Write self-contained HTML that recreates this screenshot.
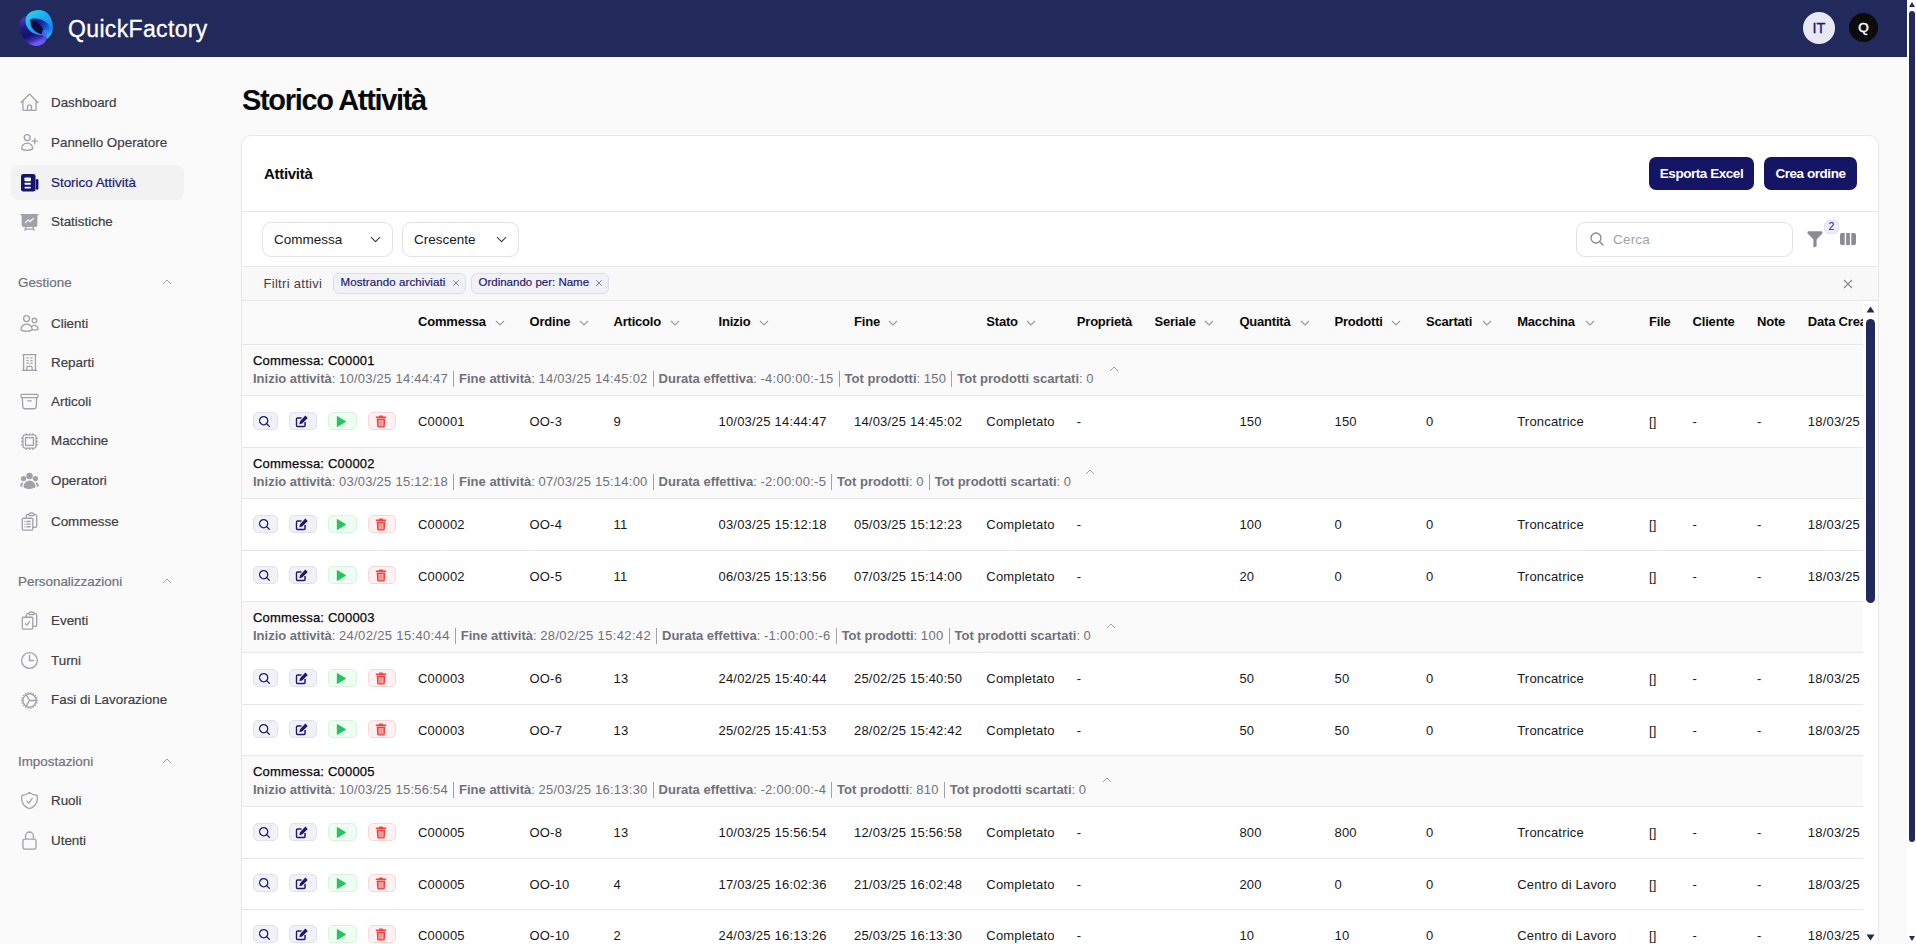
<!DOCTYPE html>
<html><head><meta charset="utf-8"><style>
*{box-sizing:border-box;margin:0;padding:0}
html,body{width:1916px;height:944px;overflow:hidden;background:#fafafa;font-family:"Liberation Sans",sans-serif;color:#111}
.a,.t{position:absolute}
svg{display:block}
.t{white-space:nowrap}
#hdr{position:absolute;left:0;top:0;width:1907px;height:57px;background:#222a5b}
.av{border-radius:50%;text-align:center}
.nav{font-size:13.4px;color:#3f3f46;-webkit-text-stroke:0.2px currentColor}
.btn{background:#141564;color:#fff;border-radius:7px;font-size:13.5px;font-weight:bold;text-align:center;letter-spacing:-0.45px}
.sel{border:1px solid #e2e2e5;border-radius:9px;background:#fff}
.chip{border:1px solid #dcdcef;background:#f1f1f8;border-radius:6px}
.hl{height:1px;background:#e7e7ea}
.th{font-size:13px;font-weight:bold;color:#09090b;letter-spacing:-0.2px}
.td{font-size:13px;color:#18181b;letter-spacing:0.2px}
.g1{font-size:13px;color:#09090b;letter-spacing:0.2px;-webkit-text-stroke:0.25px currentColor}
.g2{font-size:13px;color:#71717a}
.g2 b{font-weight:bold}
.g2 .v{letter-spacing:0.25px}
.sep{display:inline-block;width:1px;height:16px;background:#a1a1aa;vertical-align:-4px;margin:0 5px}
.ab{height:18px;border-radius:5px;border:1px solid}
</style></head><body>
<div id="hdr"></div>
<svg class="a" style="left:16px;top:6px" width="40" height="44" viewBox="0 0 40 44">
<defs>
<linearGradient id="pg" x1="0" y1="0" x2="0.35" y2="1"><stop offset="0" stop-color="#5b3fd6"/><stop offset="0.4" stop-color="#241a80"/><stop offset="0.7" stop-color="#15116e"/><stop offset="0.88" stop-color="#3a2cb8"/><stop offset="1" stop-color="#6a58f0"/></linearGradient>
<linearGradient id="cg" x1="0.1" y1="0" x2="0.9" y2="1"><stop offset="0" stop-color="#1fdcec"/><stop offset="0.5" stop-color="#1fa0f0"/><stop offset="0.8" stop-color="#1f80f2"/><stop offset="1" stop-color="#1ee0ee"/></linearGradient>
<linearGradient id="hg" x1="0" y1="0.3" x2="1" y2="0.7"><stop offset="0" stop-color="#0f0d58"/><stop offset="0.55" stop-color="#1a2aa8"/><stop offset="1" stop-color="#2077f0"/></linearGradient>
</defs>
<path d="M11 10 C5 11 3 16 3.5 22 C4.5 31 11 39 19 40 C25 40.5 29 37 30 34 L22 22 Z" fill="url(#pg)"/>
<path d="M9.5 15 C9.5 7 17 3.5 24 4 C31 4.5 35 10 36.5 17 C38 25 35 30 31 33 C30 30 28 29 25 29 C17 29 9.5 23 9.5 15 Z" fill="url(#cg)"/>
<path d="M14 14 C16 11.5 24 12 30 16 C34 19 35 23 34.5 26 C31 24 29 23.5 27 24 C22 25 15 20.5 14 14 Z" fill="url(#hg)"/>
<ellipse cx="21" cy="21.5" rx="8.2" ry="4" transform="rotate(45 21 21.5)" fill="#0d0b3c"/>
<path d="M26.5 24 C29.5 26.5 31 30.5 30.5 34 C28.5 32.5 27 29.5 26 27 Z" fill="#6055f0"/>
</svg>
<div class="t " style="left:68px;top:14.0px;line-height:30px;font-size:23px;color:#fff;letter-spacing:0.35px;-webkit-text-stroke:0.3px #fff">QuickFactory</div>
<div class="a av" style="left:1803px;top:12px;width:32px;height:32px;background:#e8e8f2;color:#1e1b6e;font-size:14.5px;line-height:32.5px;-webkit-text-stroke:0.4px currentColor">IT</div>
<div class="a av" style="left:1849px;top:13px;width:29px;height:29px;background:#0b0b0b;color:#fff;font-size:13.5px;line-height:29.5px;-webkit-text-stroke:0.5px currentColor">Q</div>
<div class="a" style="left:1907px;top:0;width:9px;height:944px;background:#fff"></div>
<div class="a" style="left:1909px;top:11px;width:6px;height:831px;background:#222a5b;border-radius:3px"></div>
<svg class="a" style="left:1909px;top:2px" width="6" height="5" viewBox="0 0 6 5" ><path d="M0 5L3 0L6 5Z" fill="#222a5b"/></svg>
<svg class="a" style="left:1909px;top:936px" width="6" height="5" viewBox="0 0 6 5" ><path d="M0 0L3 5L6 0Z" fill="#222a5b"/></svg>
<div class="a" style="left:11px;top:165px;width:173px;height:35px;background:#f2f2f3;border-radius:8px"></div>
<svg class="a" style="left:19px;top:92px" width="21" height="21" viewBox="0 0 24 24" ><path d="m2.25 12 8.954-8.955c.44-.439 1.152-.439 1.591 0L21.75 12M4.5 9.75v10.125c0 .621.504 1.125 1.125 1.125H9.75v-4.875c0-.621.504-1.125 1.125-1.125h2.25c.621 0 1.125.504 1.125 1.125V21h4.125c.621 0 1.125-.504 1.125-1.125V9.75M8.25 21h8.25" fill="none" stroke="#a1a1aa" stroke-width="1.5" stroke-linecap="round" stroke-linejoin="round"/></svg>
<div class="t nav" style="left:51px;top:93.2px;line-height:20px;color:#3f3f46">Dashboard</div>
<svg class="a" style="left:19px;top:132px" width="21" height="21" viewBox="0 0 24 24" ><path d="M18 7.5v3m0 0v3m0-3h3m-3 0h-3m-2.25-4.125a3.375 3.375 0 1 1-6.75 0 3.375 3.375 0 0 1 6.75 0ZM3 19.235v-.11a6.375 6.375 0 0 1 12.75 0v.109A12.318 12.318 0 0 1 9.374 21c-2.331 0-4.512-.645-6.374-1.766Z" fill="none" stroke="#a1a1aa" stroke-width="1.5" stroke-linecap="round" stroke-linejoin="round"/></svg>
<div class="t nav" style="left:51px;top:132.8px;line-height:20px;color:#3f3f46">Pannello Operatore</div>
<svg class="a" style="left:19px;top:172px" width="21" height="21" viewBox="0 0 24 24" ><rect x="2.3" y="2.3" width="16.6" height="19.9" rx="2.6" fill="#16146c"/><rect x="19.3" y="8" width="2.9" height="12.4" rx="1.45" fill="#16146c"/><rect x="6.2" y="6.2" width="7.4" height="4.3" rx="0.9" fill="#fff"/><rect x="6.2" y="12.4" width="7.4" height="2.1" rx="1" fill="#fff"/><rect x="6.2" y="16.8" width="7.4" height="2" rx="1" fill="#fff"/></svg>
<div class="t nav" style="left:51px;top:172.8px;line-height:20px;color:#1e1b6e">Storico Attività</div>
<svg class="a" style="left:19px;top:212px" width="21" height="21" viewBox="0 0 24 24" ><path fill="#a1a1aa" fill-rule="evenodd" d="M2.25 2.25a.75.75 0 0 0 0 1.5H3v10.5a3 3 0 0 0 3 3h1.21l-1.172 3.513a.75.75 0 0 0 1.424.474l.329-.987h8.418l.33.987a.75.75 0 0 0 1.422-.474l-1.17-3.513H18a3 3 0 0 0 3-3V3.75h.75a.75.75 0 0 0 0-1.5H2.25Zm6.54 15h6.42l.5 1.5H8.29l.5-1.5Zm8.085-8.995a.75.75 0 1 0-.75-1.299 12.81 12.81 0 0 0-3.558 3.05L11.03 8.47a.75.75 0 0 0-1.06 0l-3 3a.75.75 0 1 0 1.06 1.06l2.47-2.47 1.617 1.618a.75.75 0 0 0 1.146-.102 11.312 11.312 0 0 1 3.612-3.321Z"/></svg>
<div class="t nav" style="left:51px;top:212.3px;line-height:20px;color:#3f3f46">Statistiche</div>
<svg class="a" style="left:19px;top:313px" width="21" height="21" viewBox="0 0 24 24" ><path d="M15 19.128a9.38 9.38 0 0 0 2.625.372 9.337 9.337 0 0 0 4.121-.952 4.125 4.125 0 0 0-7.533-2.493M15 19.128v-.003c0-1.113-.285-2.16-.786-3.07M15 19.128v.106A12.318 12.318 0 0 1 8.624 21c-2.331 0-4.512-.645-6.374-1.766l-.001-.109a6.375 6.375 0 0 1 11.964-3.07M12 6.375a3.375 3.375 0 1 1-6.75 0 3.375 3.375 0 0 1 6.75 0Zm8.25 2.25a2.625 2.625 0 1 1-5.25 0 2.625 2.625 0 0 1 5.25 0Z" fill="none" stroke="#a1a1aa" stroke-width="1.5" stroke-linecap="round" stroke-linejoin="round"/></svg>
<div class="t nav" style="left:51px;top:313.5px;line-height:20px;color:#3f3f46">Clienti</div>
<svg class="a" style="left:19px;top:352px" width="21" height="21" viewBox="0 0 24 24" ><path d="M3.75 21h16.5M4.5 3h15M5.25 3v18m13.5-18v18M9 6.75h1.5m-1.5 3h1.5m-1.5 3h1.5m3-6H15m-1.5 3H15m-1.5 3H15M9 21v-3.375c0-.621.504-1.125 1.125-1.125h3.75c.621 0 1.125.504 1.125 1.125V21" fill="none" stroke="#a1a1aa" stroke-width="1.5" stroke-linecap="round" stroke-linejoin="round"/></svg>
<div class="t nav" style="left:51px;top:352.8px;line-height:20px;color:#3f3f46">Reparti</div>
<svg class="a" style="left:19px;top:391px" width="21" height="21" viewBox="0 0 24 24" ><path d="m20.25 7.5-.625 10.632a2.25 2.25 0 0 1-2.247 2.118H6.622a2.25 2.25 0 0 1-2.247-2.118L3.75 7.5M10 11.25h4M3.375 7.5h17.25c.621 0 1.125-.504 1.125-1.125v-1.5c0-.621-.504-1.125-1.125-1.125H3.375c-.621 0-1.125.504-1.125 1.125v1.5c0 .621.504 1.125 1.125 1.125Z" fill="none" stroke="#a1a1aa" stroke-width="1.5" stroke-linecap="round" stroke-linejoin="round"/></svg>
<div class="t nav" style="left:51px;top:392.1px;line-height:20px;color:#3f3f46">Articoli</div>
<svg class="a" style="left:19px;top:431px" width="21" height="21" viewBox="0 0 24 24" ><path d="M8.25 3v1.5M4.5 8.25H3m18 0h-1.5M4.5 12H3m18 0h-1.5m-15 3.75H3m18 0h-1.5M8.25 19.5V21M12 3v1.5m0 15V21m3.75-18v1.5m0 15V21m-9-1.5h10.5a2.25 2.25 0 0 0 2.25-2.25V6.75a2.25 2.25 0 0 0-2.25-2.25H6.75A2.25 2.25 0 0 0 4.5 6.75v10.5a2.25 2.25 0 0 0 2.25 2.25Zm.75-12h9v9h-9v-9Z" fill="none" stroke="#a1a1aa" stroke-width="1.5" stroke-linecap="round" stroke-linejoin="round"/></svg>
<div class="t nav" style="left:51px;top:431.4px;line-height:20px;color:#3f3f46">Macchine</div>
<svg class="a" style="left:19px;top:470px" width="21" height="21" viewBox="0 0 24 24" ><path fill="#a1a1aa" d="M8.25 6.75a3.75 3.75 0 1 1 7.5 0 3.75 3.75 0 0 1-7.5 0ZM15.75 9.75a3 3 0 1 1 6 0 3 3 0 0 1-6 0ZM2.25 9.75a3 3 0 1 1 6 0 3 3 0 0 1-6 0ZM6.31 15.117A6.745 6.745 0 0 1 12 12a6.745 6.745 0 0 1 6.709 7.498.75.75 0 0 1-.372.568A12.696 12.696 0 0 1 12 21.75c-2.305 0-4.47-.612-6.337-1.684a.75.75 0 0 1-.372-.568 6.787 6.787 0 0 1 1.019-4.38Z"/><path fill="#a1a1aa" d="M5.082 14.254a8.287 8.287 0 0 0-1.308 5.135 9.687 9.687 0 0 1-1.764-.44l-.115-.04a.563.563 0 0 1-.373-.487l-.01-.121a3.75 3.75 0 0 1 3.57-4.047ZM20.226 19.389a8.287 8.287 0 0 0-1.308-5.135 3.75 3.75 0 0 1 3.57 4.047l-.01.121a.563.563 0 0 1-.373.486l-.115.04c-.567.2-1.156.349-1.764.441Z"/></svg>
<div class="t nav" style="left:51px;top:471.3px;line-height:20px;color:#3f3f46">Operatori</div>
<svg class="a" style="left:19px;top:511px" width="21" height="21" viewBox="0 0 24 24" ><path d="M9 12h3.75M9 15h3.75M9 18h3.75m3 .75H18a2.25 2.25 0 0 0 2.25-2.25V6.108c0-1.135-.845-2.098-1.976-2.192a48.424 48.424 0 0 0-1.123-.08m-5.801 0c-.065.21-.1.433-.1.664 0 .414.336.75.75.75h4.5a.75.75 0 0 0 .75-.75 2.25 2.25 0 0 0-.1-.664m-5.8 0A2.251 2.251 0 0 1 13.5 2.25H15c1.012 0 1.867.668 2.15 1.586m-5.8 0c-.376.023-.75.05-1.124.08C9.095 4.01 8.25 4.973 8.25 6.108V8.25m0 0H4.875c-.621 0-1.125.504-1.125 1.125v11.25c0 .621.504 1.125 1.125 1.125h9.75c.621 0 1.125-.504 1.125-1.125V9.375c0-.621-.504-1.125-1.125-1.125H8.25ZM6.75 12h.008v.008H6.75V12Zm0 3h.008v.008H6.75V15Zm0 3h.008v.008H6.75V18Z" fill="none" stroke="#a1a1aa" stroke-width="1.5" stroke-linecap="round" stroke-linejoin="round"/></svg>
<div class="t nav" style="left:51px;top:511.5px;line-height:20px;color:#3f3f46">Commesse</div>
<svg class="a" style="left:19px;top:610px" width="21" height="21" viewBox="0 0 24 24" ><path d="M11.35 3.836c-.065.21-.1.433-.1.664 0 .414.336.75.75.75h4.5a.75.75 0 0 0 .75-.75 2.25 2.25 0 0 0-.1-.664m-5.8 0A2.251 2.251 0 0 1 13.5 2.25H15c1.012 0 1.867.668 2.15 1.586m-5.8 0c-.376.023-.75.05-1.124.08C9.095 4.01 8.25 4.973 8.25 6.108V8.25m8.9-4.414c.376.023.75.05 1.124.08 1.131.094 1.976 1.057 1.976 2.192V16.5A2.25 2.25 0 0 1 18 18.75h-2.25m-7.5-10.5H4.875c-.621 0-1.125.504-1.125 1.125v11.25c0 .621.504 1.125 1.125 1.125h9.75c.621 0 1.125-.504 1.125-1.125V18.75m-7.5-10.5h6.375c.621 0 1.125.504 1.125 1.125v9.375m-8.25-3 1.5 1.5 3-3.75" fill="none" stroke="#a1a1aa" stroke-width="1.5" stroke-linecap="round" stroke-linejoin="round"/></svg>
<div class="t nav" style="left:51px;top:611.3px;line-height:20px;color:#3f3f46">Eventi</div>
<svg class="a" style="left:19px;top:650px" width="21" height="21" viewBox="0 0 24 24" ><path d="M12 6v6h4.5m4.5 0a9 9 0 1 1-18 0 9 9 0 0 1 18 0Z" fill="none" stroke="#a1a1aa" stroke-width="1.5" stroke-linecap="round" stroke-linejoin="round"/></svg>
<div class="t nav" style="left:51px;top:650.8px;line-height:20px;color:#3f3f46">Turni</div>
<svg class="a" style="left:19px;top:690px" width="21" height="21" viewBox="0 0 24 24" ><path d="M4.5 12a7.5 7.5 0 0 0 15 0m-15 0a7.5 7.5 0 1 1 15 0m-15 0H3m16.5 0H21m-1.5 0H12m-8.457 3.077 1.41-.513m14.095-5.13 1.41-.513M5.106 17.785l1.15-.964m11.49-9.642 1.149-.964M7.501 19.795l.75-1.3m7.5-12.99.75-1.3m-6.063 16.658.26-1.477m2.605-14.772.26-1.477m0 17.726-.26-1.477M10.698 4.614l-.26-1.477M16.5 19.794l-.75-1.299M7.5 4.205 12 12m6.894 5.785-1.149-.964M6.256 7.178l-1.15-.964m15.352 8.864-1.41-.513M4.954 9.435l-1.41-.514M12.002 12l-3.75 6.495" fill="none" stroke="#a1a1aa" stroke-width="1.5" stroke-linecap="round" stroke-linejoin="round"/></svg>
<div class="t nav" style="left:51px;top:690.3px;line-height:20px;color:#3f3f46">Fasi di Lavorazione</div>
<svg class="a" style="left:19px;top:790px" width="21" height="21" viewBox="0 0 24 24" ><path d="M9 12.75 11.25 15 15 9.75m-3-7.036A11.959 11.959 0 0 1 3.598 6 11.99 11.99 0 0 0 3 9.749c0 5.592 3.824 10.29 9 11.623 5.176-1.332 9-6.03 9-11.622 0-1.31-.21-2.571-.598-3.751h-.152c-3.196 0-6.1-1.248-8.25-3.285Z" fill="none" stroke="#a1a1aa" stroke-width="1.5" stroke-linecap="round" stroke-linejoin="round"/></svg>
<div class="t nav" style="left:51px;top:791.3px;line-height:20px;color:#3f3f46">Ruoli</div>
<svg class="a" style="left:19px;top:830px" width="21" height="21" viewBox="0 0 24 24" ><path d="M16.5 10.5V6.75a4.5 4.5 0 1 0-9 0v3.75m-.75 11.25h10.5a2.25 2.25 0 0 0 2.25-2.25v-6.75a2.25 2.25 0 0 0-2.25-2.25H6.75a2.25 2.25 0 0 0-2.25 2.25v6.75a2.25 2.25 0 0 0 2.25 2.25Z" fill="none" stroke="#a1a1aa" stroke-width="1.5" stroke-linecap="round" stroke-linejoin="round"/></svg>
<div class="t nav" style="left:51px;top:830.8px;line-height:20px;color:#3f3f46">Utenti</div>
<div class="t nav" style="left:18px;top:273.3px;line-height:20px;color:#71717a">Gestione</div>
<div class="a" style="left:162px;top:279px"><svg width="10" height="6" viewBox="0 0 10 6"><path d="M1 5l4-4 4 4" fill="none" stroke="#9c9ca5" stroke-width="1"/></svg></div>
<div class="t nav" style="left:18px;top:571.9px;line-height:20px;color:#71717a">Personalizzazioni</div>
<div class="a" style="left:162px;top:578px"><svg width="10" height="6" viewBox="0 0 10 6"><path d="M1 5l4-4 4 4" fill="none" stroke="#9c9ca5" stroke-width="1"/></svg></div>
<div class="t nav" style="left:18px;top:751.9px;line-height:20px;color:#71717a">Impostazioni</div>
<div class="a" style="left:162px;top:758px"><svg width="10" height="6" viewBox="0 0 10 6"><path d="M1 5l4-4 4 4" fill="none" stroke="#9c9ca5" stroke-width="1"/></svg></div>
<div class="t " style="left:242px;top:82.4px;line-height:36px;font-size:29px;font-weight:bold;color:#09090b;letter-spacing:-1.33px">Storico Attività</div>
<div class="a" style="left:241px;top:135px;width:1638px;height:830px;background:#fff;border:1px solid #e7e7ea;border-radius:10px"></div>
<div class="t " style="left:264px;top:163.6px;line-height:20px;font-size:15px;font-weight:bold;color:#09090b;letter-spacing:-0.3px">Attività</div>
<div class="a btn" style="left:1649px;top:157px;width:105px;height:33px;line-height:33px">Esporta Excel</div>
<div class="a btn" style="left:1764px;top:157px;width:93px;height:33px;line-height:33px">Crea ordine</div>
<div class="a hl" style="left:242px;top:211px;width:1636px"></div>
<div class="a sel" style="left:262px;top:222px;width:131px;height:35px"></div>
<div class="t " style="left:274px;top:229.5px;line-height:20px;font-size:13.5px;color:#18181b">Commessa</div>
<div class="a" style="left:370px;top:235.5px"><svg width="11" height="7" viewBox="0 0 11 7"><path d="M1 1.2l4.5 4.5L10 1.2" fill="none" stroke="#3f3f46" stroke-width="1.1"/></svg></div>
<div class="a sel" style="left:402px;top:222px;width:117px;height:35px"></div>
<div class="t " style="left:414px;top:229.5px;line-height:20px;font-size:13.5px;color:#18181b">Crescente</div>
<div class="a" style="left:496px;top:235.5px"><svg width="11" height="7" viewBox="0 0 11 7"><path d="M1 1.2l4.5 4.5L10 1.2" fill="none" stroke="#3f3f46" stroke-width="1.1"/></svg></div>
<div class="a sel" style="left:1576px;top:222px;width:217px;height:35px"></div>
<svg class="a" style="left:1589px;top:231px" width="16" height="16" viewBox="0 0 24 24" ><path d="m21 21-5.197-5.197m0 0A7.5 7.5 0 1 0 5.196 5.196a7.5 7.5 0 0 0 10.607 10.607Z" fill="none" stroke="#8a8a93" stroke-width="2" stroke-linecap="round"/></svg>
<div class="t " style="left:1613px;top:230.3px;line-height:20px;font-size:13.5px;color:#9ca3af;letter-spacing:0.2px">Cerca</div>
<svg class="a" style="left:1807px;top:231px" width="16" height="17" viewBox="0 0 16 17" ><path d="M0.5 1.2Q0.5 0.3 1.5 0.3H14.5Q15.5 0.3 15.5 1.2V2.2L9.6 8.6V15.6L6.4 16.4V8.6L0.5 2.2Z" fill="#8b8b93"/></svg>
<div class="a" style="left:1824px;top:220px;width:15px;height:14px;background:#eeeef8;border:1px solid #dfdff0;border-radius:5px;font-size:10.5px;line-height:11.5px;text-align:center;color:#1e1b6e">2</div>
<svg class="a" style="left:1840px;top:233px" width="16" height="12" viewBox="0 0 17 12" preserveAspectRatio="none"><path d="M2 0H5V12H2A2 2 0 0 1 0 10V2A2 2 0 0 1 2 0Z M6.5 0H10.5V12H6.5Z M12 0H15A2 2 0 0 1 17 2V10A2 2 0 0 1 15 12H12Z" fill="#8b8b93"/></svg>
<div class="a hl" style="left:242px;top:266px;width:1636px"></div>
<div class="a" style="left:242px;top:267px;width:1636px;height:33px;background:#f8f8f8"></div>
<div class="t " style="left:263.5px;top:273.5px;line-height:20px;font-size:13px;color:#3f3f46;letter-spacing:0.3px">Filtri attivi</div>
<div class="a chip" style="left:333px;top:273px;width:133px;height:21px"></div>
<div class="t " style="left:340.5px;top:272.2px;line-height:20px;font-size:11.5px;color:#1e1b6e;letter-spacing:0.1px;-webkit-text-stroke:0.2px currentColor">Mostrando archiviati</div>
<div class="a" style="left:451.5px;top:279.2px"><svg width="8" height="8" viewBox="0 0 8 8"><path d="M1.2 1.2l5.6 5.6M6.8 1.2L1.2 6.8" stroke="#8080a0" stroke-width="1"/></svg></div>
<div class="a chip" style="left:471px;top:273px;width:138px;height:21px"></div>
<div class="t " style="left:478.5px;top:272.2px;line-height:20px;font-size:11.5px;color:#1e1b6e;letter-spacing:0.0px;-webkit-text-stroke:0.2px currentColor">Ordinando per: Name</div>
<div class="a" style="left:594.5px;top:279.2px"><svg width="8" height="8" viewBox="0 0 8 8"><path d="M1.2 1.2l5.6 5.6M6.8 1.2L1.2 6.8" stroke="#8080a0" stroke-width="1"/></svg></div>
<svg class="a" style="left:1843px;top:279px" width="10" height="10" viewBox="0 0 10 10" ><path d="M1 1l8 8M9 1L1 9" stroke="#8a8a93" stroke-width="1.2"/></svg>
<div class="a hl" style="left:242px;top:300px;width:1636px"></div>
<div class="a" style="left:242px;top:301px;width:1621px;height:643px;overflow:hidden"><div class="a" style="left:0;top:0;width:1621px;height:43px;background:#fafafa"></div><div class="a hl" style="left:0;top:43px;width:1621px"></div><div class="t th" style="left:176px;top:10.5px;line-height:20px;">Commessa</div><div class="a" style="left:252.8px;top:18.5px"><svg width="10" height="6" viewBox="0 0 10 6"><path d="M1 1l4 4 4-4" fill="none" stroke="#9a9aa3" stroke-width="1.1"/></svg></div><div class="t th" style="left:287.5px;top:10.5px;line-height:20px;">Ordine</div><div class="a" style="left:336.8px;top:18.5px"><svg width="10" height="6" viewBox="0 0 10 6"><path d="M1 1l4 4 4-4" fill="none" stroke="#9a9aa3" stroke-width="1.1"/></svg></div><div class="t th" style="left:371.5px;top:10.5px;line-height:20px;">Articolo</div><div class="a" style="left:427.5px;top:18.5px"><svg width="10" height="6" viewBox="0 0 10 6"><path d="M1 1l4 4 4-4" fill="none" stroke="#9a9aa3" stroke-width="1.1"/></svg></div><div class="t th" style="left:476.5px;top:10.5px;line-height:20px;">Inizio</div><div class="a" style="left:516.6px;top:18.5px"><svg width="10" height="6" viewBox="0 0 10 6"><path d="M1 1l4 4 4-4" fill="none" stroke="#9a9aa3" stroke-width="1.1"/></svg></div><div class="t th" style="left:612px;top:10.5px;line-height:20px;">Fine</div><div class="a" style="left:646.0px;top:18.5px"><svg width="10" height="6" viewBox="0 0 10 6"><path d="M1 1l4 4 4-4" fill="none" stroke="#9a9aa3" stroke-width="1.1"/></svg></div><div class="t th" style="left:744.3px;top:10.5px;line-height:20px;">Stato</div><div class="a" style="left:784.4px;top:18.5px"><svg width="10" height="6" viewBox="0 0 10 6"><path d="M1 1l4 4 4-4" fill="none" stroke="#9a9aa3" stroke-width="1.1"/></svg></div><div class="t th" style="left:834.8px;top:10.5px;line-height:20px;">Proprietà</div><div class="t th" style="left:912.5px;top:10.5px;line-height:20px;">Seriale</div><div class="a" style="left:962.0px;top:18.5px"><svg width="10" height="6" viewBox="0 0 10 6"><path d="M1 1l4 4 4-4" fill="none" stroke="#9a9aa3" stroke-width="1.1"/></svg></div><div class="t th" style="left:997.4000000000001px;top:10.5px;line-height:20px;">Quantità</div><div class="a" style="left:1057.5px;top:18.5px"><svg width="10" height="6" viewBox="0 0 10 6"><path d="M1 1l4 4 4-4" fill="none" stroke="#9a9aa3" stroke-width="1.1"/></svg></div><div class="t th" style="left:1092.5px;top:10.5px;line-height:20px;">Prodotti</div><div class="a" style="left:1149.0px;top:18.5px"><svg width="10" height="6" viewBox="0 0 10 6"><path d="M1 1l4 4 4-4" fill="none" stroke="#9a9aa3" stroke-width="1.1"/></svg></div><div class="t th" style="left:1184px;top:10.5px;line-height:20px;">Scartati</div><div class="a" style="left:1240.0px;top:18.5px"><svg width="10" height="6" viewBox="0 0 10 6"><path d="M1 1l4 4 4-4" fill="none" stroke="#9a9aa3" stroke-width="1.1"/></svg></div><div class="t th" style="left:1275.2px;top:10.5px;line-height:20px;">Macchina</div><div class="a" style="left:1342.7px;top:18.5px"><svg width="10" height="6" viewBox="0 0 10 6"><path d="M1 1l4 4 4-4" fill="none" stroke="#9a9aa3" stroke-width="1.1"/></svg></div><div class="t th" style="left:1407px;top:10.5px;line-height:20px;">File</div><div class="t th" style="left:1450.6px;top:10.5px;line-height:20px;">Cliente</div><div class="t th" style="left:1515px;top:10.5px;line-height:20px;">Note</div><div class="t th" style="left:1565.8px;top:10.5px;line-height:20px;">Data Creazione</div><div class="a" style="left:0;top:44px;width:1621px;height:50px;background:#fafafa"></div><div class="t g1" style="left:11px;top:49.5px;line-height:20px;">Commessa: C00001</div><div class="t g2" style="left:11px;top:67.5px;line-height:20px;"><b>Inizio attività</b>: <span class="v" style="letter-spacing:0.25px">10/03/25 14:44:47</span><span class="sep"></span><b>Fine attività</b>: <span class="v" style="letter-spacing:0.25px">14/03/25 14:45:02</span><span class="sep"></span><b>Durata effettiva</b>: <span class="v" style="letter-spacing:0.25px">-4:00:00:-15</span><span class="sep"></span><b>Tot prodotti</b>: <span class="v" style="letter-spacing:0.25px">150</span><span class="sep"></span><b>Tot prodotti scartati</b>: <span class="v" style="letter-spacing:0.25px">0</span></div><div class="a" style="left:867.0px;top:65px"><svg width="10" height="6" viewBox="0 0 10 6"><path d="M1 5l4-4 4 4" fill="none" stroke="#9c9ca5" stroke-width="1"/></svg></div><div class="a hl" style="left:0;top:94px;width:1621px"></div><div class="a ab" style="left:11px;top:111px;width:25px;background:#f1f1f8;border-color:#e0e0ee"></div><svg class="a" style="left:16px;top:114px" width="13" height="13" viewBox="0 0 24 24" ><path d="m21 21-5.197-5.197m0 0A7.5 7.5 0 1 0 5.196 5.196a7.5 7.5 0 0 0 10.607 10.607Z" fill="none" stroke="#1e1b6e" stroke-width="2.4" stroke-linecap="round"/></svg><div class="a ab" style="left:47px;top:111px;width:28px;background:#f1f1f8;border-color:#e0e0ee"></div><svg class="a" style="left:53px;top:113.5px" width="13" height="13" viewBox="0 0 13 13" ><path d="M2.5 2.3H6.5V3.7H2.6Q2.2 3.7 2.2 4.1V10.4Q2.2 10.8 2.6 10.8H8.9Q9.3 10.8 9.3 10.4V7H10.8V10.6Q10.8 12.2 9.2 12.2H2.3Q0.8 12.2 0.8 10.6V3.9Q0.8 2.3 2.5 2.3Z" fill="#1e1b6e"/><path d="M10.6 0.7L12.3 2.4Q12.8 2.9 12.3 3.4L7.2 8.5L4.3 9.2L5 6.3L10.1 0.7Q10.3 0.4 10.6 0.7Z" fill="#1e1b6e"/></svg><div class="a ab" style="left:86px;top:111px;width:29px;background:#effcf2;border-color:#d6f5de"></div><svg class="a" style="left:94px;top:114px" width="12" height="13" viewBox="0 0 12 13" ><path d="M1.6 1.2L9.6 5.9Q10.4 6.5 9.6 7.1L1.6 11.8Q0.8 12.2 0.8 11.3V1.7Q0.8 0.8 1.6 1.2Z" fill="#22c55e"/></svg><div class="a ab" style="left:126px;top:111px;width:28px;background:#fef1f1;border-color:#fad6d6"></div><svg class="a" style="left:133px;top:114px" width="12" height="13" viewBox="0 0 12 13" ><path d="M4.3 0.6H7.7L8.2 1.6H11.2V3H0.8V1.6H3.8Z" fill="#ef4444"/><path d="M1.6 3.6H10.4L9.8 11.6Q9.7 12.6 8.7 12.6H3.3Q2.3 12.6 2.2 11.6Z" fill="#ef4444"/><path d="M4.2 5V11.2M6 5V11.2M7.8 5V11.2" stroke="#fef1f1" stroke-width="0.9"/></svg><div class="t td" style="left:176px;top:111.1px;line-height:20px;">C00001</div><div class="t td" style="left:287.5px;top:111.1px;line-height:20px;">OO-3</div><div class="t td" style="left:371.5px;top:111.1px;line-height:20px;">9</div><div class="t td" style="left:476.5px;top:111.1px;line-height:20px;">10/03/25 14:44:47</div><div class="t td" style="left:612px;top:111.1px;line-height:20px;">14/03/25 14:45:02</div><div class="t td" style="left:744.3px;top:111.1px;line-height:20px;">Completato</div><div class="t td" style="left:834.8px;top:111.1px;line-height:20px;">-</div><div class="t td" style="left:997.4000000000001px;top:111.1px;line-height:20px;">150</div><div class="t td" style="left:1092.5px;top:111.1px;line-height:20px;">150</div><div class="t td" style="left:1184px;top:111.1px;line-height:20px;">0</div><div class="t td" style="left:1275.2px;top:111.1px;line-height:20px;">Troncatrice</div><div class="t td" style="left:1407px;top:111.1px;line-height:20px;">[]</div><div class="t td" style="left:1450.6px;top:111.1px;line-height:20px;">-</div><div class="t td" style="left:1515px;top:111.1px;line-height:20px;">-</div><div class="t td" style="left:1565.8px;top:111.1px;line-height:20px;">18/03/25</div><div class="a hl" style="left:0;top:146px;width:1621px"></div><div class="a" style="left:0;top:147px;width:1621px;height:50px;background:#fafafa"></div><div class="t g1" style="left:11px;top:152.5px;line-height:20px;">Commessa: C00002</div><div class="t g2" style="left:11px;top:170.5px;line-height:20px;"><b>Inizio attività</b>: <span class="v" style="letter-spacing:0.25px">03/03/25 15:12:18</span><span class="sep"></span><b>Fine attività</b>: <span class="v" style="letter-spacing:0.25px">07/03/25 15:14:00</span><span class="sep"></span><b>Durata effettiva</b>: <span class="v" style="letter-spacing:0.25px">-2:00:00:-5</span><span class="sep"></span><b>Tot prodotti</b>: <span class="v" style="letter-spacing:0.25px">0</span><span class="sep"></span><b>Tot prodotti scartati</b>: <span class="v" style="letter-spacing:0.25px">0</span></div><div class="a" style="left:843.0px;top:168px"><svg width="10" height="6" viewBox="0 0 10 6"><path d="M1 5l4-4 4 4" fill="none" stroke="#9c9ca5" stroke-width="1"/></svg></div><div class="a hl" style="left:0;top:197px;width:1621px"></div><div class="a ab" style="left:11px;top:214px;width:25px;background:#f1f1f8;border-color:#e0e0ee"></div><svg class="a" style="left:16px;top:217px" width="13" height="13" viewBox="0 0 24 24" ><path d="m21 21-5.197-5.197m0 0A7.5 7.5 0 1 0 5.196 5.196a7.5 7.5 0 0 0 10.607 10.607Z" fill="none" stroke="#1e1b6e" stroke-width="2.4" stroke-linecap="round"/></svg><div class="a ab" style="left:47px;top:214px;width:28px;background:#f1f1f8;border-color:#e0e0ee"></div><svg class="a" style="left:53px;top:216.5px" width="13" height="13" viewBox="0 0 13 13" ><path d="M2.5 2.3H6.5V3.7H2.6Q2.2 3.7 2.2 4.1V10.4Q2.2 10.8 2.6 10.8H8.9Q9.3 10.8 9.3 10.4V7H10.8V10.6Q10.8 12.2 9.2 12.2H2.3Q0.8 12.2 0.8 10.6V3.9Q0.8 2.3 2.5 2.3Z" fill="#1e1b6e"/><path d="M10.6 0.7L12.3 2.4Q12.8 2.9 12.3 3.4L7.2 8.5L4.3 9.2L5 6.3L10.1 0.7Q10.3 0.4 10.6 0.7Z" fill="#1e1b6e"/></svg><div class="a ab" style="left:86px;top:214px;width:29px;background:#effcf2;border-color:#d6f5de"></div><svg class="a" style="left:94px;top:217px" width="12" height="13" viewBox="0 0 12 13" ><path d="M1.6 1.2L9.6 5.9Q10.4 6.5 9.6 7.1L1.6 11.8Q0.8 12.2 0.8 11.3V1.7Q0.8 0.8 1.6 1.2Z" fill="#22c55e"/></svg><div class="a ab" style="left:126px;top:214px;width:28px;background:#fef1f1;border-color:#fad6d6"></div><svg class="a" style="left:133px;top:217px" width="12" height="13" viewBox="0 0 12 13" ><path d="M4.3 0.6H7.7L8.2 1.6H11.2V3H0.8V1.6H3.8Z" fill="#ef4444"/><path d="M1.6 3.6H10.4L9.8 11.6Q9.7 12.6 8.7 12.6H3.3Q2.3 12.6 2.2 11.6Z" fill="#ef4444"/><path d="M4.2 5V11.2M6 5V11.2M7.8 5V11.2" stroke="#fef1f1" stroke-width="0.9"/></svg><div class="t td" style="left:176px;top:214.0px;line-height:20px;">C00002</div><div class="t td" style="left:287.5px;top:214.0px;line-height:20px;">OO-4</div><div class="t td" style="left:371.5px;top:214.0px;line-height:20px;">11</div><div class="t td" style="left:476.5px;top:214.0px;line-height:20px;">03/03/25 15:12:18</div><div class="t td" style="left:612px;top:214.0px;line-height:20px;">05/03/25 15:12:23</div><div class="t td" style="left:744.3px;top:214.0px;line-height:20px;">Completato</div><div class="t td" style="left:834.8px;top:214.0px;line-height:20px;">-</div><div class="t td" style="left:997.4000000000001px;top:214.0px;line-height:20px;">100</div><div class="t td" style="left:1092.5px;top:214.0px;line-height:20px;">0</div><div class="t td" style="left:1184px;top:214.0px;line-height:20px;">0</div><div class="t td" style="left:1275.2px;top:214.0px;line-height:20px;">Troncatrice</div><div class="t td" style="left:1407px;top:214.0px;line-height:20px;">[]</div><div class="t td" style="left:1450.6px;top:214.0px;line-height:20px;">-</div><div class="t td" style="left:1515px;top:214.0px;line-height:20px;">-</div><div class="t td" style="left:1565.8px;top:214.0px;line-height:20px;">18/03/25</div><div class="a hl" style="left:0;top:249px;width:1621px"></div><div class="a ab" style="left:11px;top:265px;width:25px;background:#f1f1f8;border-color:#e0e0ee"></div><svg class="a" style="left:16px;top:268px" width="13" height="13" viewBox="0 0 24 24" ><path d="m21 21-5.197-5.197m0 0A7.5 7.5 0 1 0 5.196 5.196a7.5 7.5 0 0 0 10.607 10.607Z" fill="none" stroke="#1e1b6e" stroke-width="2.4" stroke-linecap="round"/></svg><div class="a ab" style="left:47px;top:265px;width:28px;background:#f1f1f8;border-color:#e0e0ee"></div><svg class="a" style="left:53px;top:267.5px" width="13" height="13" viewBox="0 0 13 13" ><path d="M2.5 2.3H6.5V3.7H2.6Q2.2 3.7 2.2 4.1V10.4Q2.2 10.8 2.6 10.8H8.9Q9.3 10.8 9.3 10.4V7H10.8V10.6Q10.8 12.2 9.2 12.2H2.3Q0.8 12.2 0.8 10.6V3.9Q0.8 2.3 2.5 2.3Z" fill="#1e1b6e"/><path d="M10.6 0.7L12.3 2.4Q12.8 2.9 12.3 3.4L7.2 8.5L4.3 9.2L5 6.3L10.1 0.7Q10.3 0.4 10.6 0.7Z" fill="#1e1b6e"/></svg><div class="a ab" style="left:86px;top:265px;width:29px;background:#effcf2;border-color:#d6f5de"></div><svg class="a" style="left:94px;top:268px" width="12" height="13" viewBox="0 0 12 13" ><path d="M1.6 1.2L9.6 5.9Q10.4 6.5 9.6 7.1L1.6 11.8Q0.8 12.2 0.8 11.3V1.7Q0.8 0.8 1.6 1.2Z" fill="#22c55e"/></svg><div class="a ab" style="left:126px;top:265px;width:28px;background:#fef1f1;border-color:#fad6d6"></div><svg class="a" style="left:133px;top:268px" width="12" height="13" viewBox="0 0 12 13" ><path d="M4.3 0.6H7.7L8.2 1.6H11.2V3H0.8V1.6H3.8Z" fill="#ef4444"/><path d="M1.6 3.6H10.4L9.8 11.6Q9.7 12.6 8.7 12.6H3.3Q2.3 12.6 2.2 11.6Z" fill="#ef4444"/><path d="M4.2 5V11.2M6 5V11.2M7.8 5V11.2" stroke="#fef1f1" stroke-width="0.9"/></svg><div class="t td" style="left:176px;top:265.5px;line-height:20px;">C00002</div><div class="t td" style="left:287.5px;top:265.5px;line-height:20px;">OO-5</div><div class="t td" style="left:371.5px;top:265.5px;line-height:20px;">11</div><div class="t td" style="left:476.5px;top:265.5px;line-height:20px;">06/03/25 15:13:56</div><div class="t td" style="left:612px;top:265.5px;line-height:20px;">07/03/25 15:14:00</div><div class="t td" style="left:744.3px;top:265.5px;line-height:20px;">Completato</div><div class="t td" style="left:834.8px;top:265.5px;line-height:20px;">-</div><div class="t td" style="left:997.4000000000001px;top:265.5px;line-height:20px;">20</div><div class="t td" style="left:1092.5px;top:265.5px;line-height:20px;">0</div><div class="t td" style="left:1184px;top:265.5px;line-height:20px;">0</div><div class="t td" style="left:1275.2px;top:265.5px;line-height:20px;">Troncatrice</div><div class="t td" style="left:1407px;top:265.5px;line-height:20px;">[]</div><div class="t td" style="left:1450.6px;top:265.5px;line-height:20px;">-</div><div class="t td" style="left:1515px;top:265.5px;line-height:20px;">-</div><div class="t td" style="left:1565.8px;top:265.5px;line-height:20px;">18/03/25</div><div class="a hl" style="left:0;top:300px;width:1621px"></div><div class="a" style="left:0;top:301px;width:1621px;height:50px;background:#fafafa"></div><div class="t g1" style="left:11px;top:306.5px;line-height:20px;">Commessa: C00003</div><div class="t g2" style="left:11px;top:324.5px;line-height:20px;"><b>Inizio attività</b>: <span class="v" style="letter-spacing:0.35px">24/02/25 15:40:44</span><span class="sep"></span><b>Fine attività</b>: <span class="v" style="letter-spacing:0.35px">28/02/25 15:42:42</span><span class="sep"></span><b>Durata effettiva</b>: <span class="v" style="letter-spacing:0.35px">-1:00:00:-6</span><span class="sep"></span><b>Tot prodotti</b>: <span class="v" style="letter-spacing:0.35px">100</span><span class="sep"></span><b>Tot prodotti scartati</b>: <span class="v" style="letter-spacing:0.35px">0</span></div><div class="a" style="left:864.0px;top:322px"><svg width="10" height="6" viewBox="0 0 10 6"><path d="M1 5l4-4 4 4" fill="none" stroke="#9c9ca5" stroke-width="1"/></svg></div><div class="a hl" style="left:0;top:351px;width:1621px"></div><div class="a ab" style="left:11px;top:368px;width:25px;background:#f1f1f8;border-color:#e0e0ee"></div><svg class="a" style="left:16px;top:371px" width="13" height="13" viewBox="0 0 24 24" ><path d="m21 21-5.197-5.197m0 0A7.5 7.5 0 1 0 5.196 5.196a7.5 7.5 0 0 0 10.607 10.607Z" fill="none" stroke="#1e1b6e" stroke-width="2.4" stroke-linecap="round"/></svg><div class="a ab" style="left:47px;top:368px;width:28px;background:#f1f1f8;border-color:#e0e0ee"></div><svg class="a" style="left:53px;top:370.5px" width="13" height="13" viewBox="0 0 13 13" ><path d="M2.5 2.3H6.5V3.7H2.6Q2.2 3.7 2.2 4.1V10.4Q2.2 10.8 2.6 10.8H8.9Q9.3 10.8 9.3 10.4V7H10.8V10.6Q10.8 12.2 9.2 12.2H2.3Q0.8 12.2 0.8 10.6V3.9Q0.8 2.3 2.5 2.3Z" fill="#1e1b6e"/><path d="M10.6 0.7L12.3 2.4Q12.8 2.9 12.3 3.4L7.2 8.5L4.3 9.2L5 6.3L10.1 0.7Q10.3 0.4 10.6 0.7Z" fill="#1e1b6e"/></svg><div class="a ab" style="left:86px;top:368px;width:29px;background:#effcf2;border-color:#d6f5de"></div><svg class="a" style="left:94px;top:371px" width="12" height="13" viewBox="0 0 12 13" ><path d="M1.6 1.2L9.6 5.9Q10.4 6.5 9.6 7.1L1.6 11.8Q0.8 12.2 0.8 11.3V1.7Q0.8 0.8 1.6 1.2Z" fill="#22c55e"/></svg><div class="a ab" style="left:126px;top:368px;width:28px;background:#fef1f1;border-color:#fad6d6"></div><svg class="a" style="left:133px;top:371px" width="12" height="13" viewBox="0 0 12 13" ><path d="M4.3 0.6H7.7L8.2 1.6H11.2V3H0.8V1.6H3.8Z" fill="#ef4444"/><path d="M1.6 3.6H10.4L9.8 11.6Q9.7 12.6 8.7 12.6H3.3Q2.3 12.6 2.2 11.6Z" fill="#ef4444"/><path d="M4.2 5V11.2M6 5V11.2M7.8 5V11.2" stroke="#fef1f1" stroke-width="0.9"/></svg><div class="t td" style="left:176px;top:368.0px;line-height:20px;">C00003</div><div class="t td" style="left:287.5px;top:368.0px;line-height:20px;">OO-6</div><div class="t td" style="left:371.5px;top:368.0px;line-height:20px;">13</div><div class="t td" style="left:476.5px;top:368.0px;line-height:20px;">24/02/25 15:40:44</div><div class="t td" style="left:612px;top:368.0px;line-height:20px;">25/02/25 15:40:50</div><div class="t td" style="left:744.3px;top:368.0px;line-height:20px;">Completato</div><div class="t td" style="left:834.8px;top:368.0px;line-height:20px;">-</div><div class="t td" style="left:997.4000000000001px;top:368.0px;line-height:20px;">50</div><div class="t td" style="left:1092.5px;top:368.0px;line-height:20px;">50</div><div class="t td" style="left:1184px;top:368.0px;line-height:20px;">0</div><div class="t td" style="left:1275.2px;top:368.0px;line-height:20px;">Troncatrice</div><div class="t td" style="left:1407px;top:368.0px;line-height:20px;">[]</div><div class="t td" style="left:1450.6px;top:368.0px;line-height:20px;">-</div><div class="t td" style="left:1515px;top:368.0px;line-height:20px;">-</div><div class="t td" style="left:1565.8px;top:368.0px;line-height:20px;">18/03/25</div><div class="a hl" style="left:0;top:403px;width:1621px"></div><div class="a ab" style="left:11px;top:419px;width:25px;background:#f1f1f8;border-color:#e0e0ee"></div><svg class="a" style="left:16px;top:422px" width="13" height="13" viewBox="0 0 24 24" ><path d="m21 21-5.197-5.197m0 0A7.5 7.5 0 1 0 5.196 5.196a7.5 7.5 0 0 0 10.607 10.607Z" fill="none" stroke="#1e1b6e" stroke-width="2.4" stroke-linecap="round"/></svg><div class="a ab" style="left:47px;top:419px;width:28px;background:#f1f1f8;border-color:#e0e0ee"></div><svg class="a" style="left:53px;top:421.5px" width="13" height="13" viewBox="0 0 13 13" ><path d="M2.5 2.3H6.5V3.7H2.6Q2.2 3.7 2.2 4.1V10.4Q2.2 10.8 2.6 10.8H8.9Q9.3 10.8 9.3 10.4V7H10.8V10.6Q10.8 12.2 9.2 12.2H2.3Q0.8 12.2 0.8 10.6V3.9Q0.8 2.3 2.5 2.3Z" fill="#1e1b6e"/><path d="M10.6 0.7L12.3 2.4Q12.8 2.9 12.3 3.4L7.2 8.5L4.3 9.2L5 6.3L10.1 0.7Q10.3 0.4 10.6 0.7Z" fill="#1e1b6e"/></svg><div class="a ab" style="left:86px;top:419px;width:29px;background:#effcf2;border-color:#d6f5de"></div><svg class="a" style="left:94px;top:422px" width="12" height="13" viewBox="0 0 12 13" ><path d="M1.6 1.2L9.6 5.9Q10.4 6.5 9.6 7.1L1.6 11.8Q0.8 12.2 0.8 11.3V1.7Q0.8 0.8 1.6 1.2Z" fill="#22c55e"/></svg><div class="a ab" style="left:126px;top:419px;width:28px;background:#fef1f1;border-color:#fad6d6"></div><svg class="a" style="left:133px;top:422px" width="12" height="13" viewBox="0 0 12 13" ><path d="M4.3 0.6H7.7L8.2 1.6H11.2V3H0.8V1.6H3.8Z" fill="#ef4444"/><path d="M1.6 3.6H10.4L9.8 11.6Q9.7 12.6 8.7 12.6H3.3Q2.3 12.6 2.2 11.6Z" fill="#ef4444"/><path d="M4.2 5V11.2M6 5V11.2M7.8 5V11.2" stroke="#fef1f1" stroke-width="0.9"/></svg><div class="t td" style="left:176px;top:419.5px;line-height:20px;">C00003</div><div class="t td" style="left:287.5px;top:419.5px;line-height:20px;">OO-7</div><div class="t td" style="left:371.5px;top:419.5px;line-height:20px;">13</div><div class="t td" style="left:476.5px;top:419.5px;line-height:20px;">25/02/25 15:41:53</div><div class="t td" style="left:612px;top:419.5px;line-height:20px;">28/02/25 15:42:42</div><div class="t td" style="left:744.3px;top:419.5px;line-height:20px;">Completato</div><div class="t td" style="left:834.8px;top:419.5px;line-height:20px;">-</div><div class="t td" style="left:997.4000000000001px;top:419.5px;line-height:20px;">50</div><div class="t td" style="left:1092.5px;top:419.5px;line-height:20px;">50</div><div class="t td" style="left:1184px;top:419.5px;line-height:20px;">0</div><div class="t td" style="left:1275.2px;top:419.5px;line-height:20px;">Troncatrice</div><div class="t td" style="left:1407px;top:419.5px;line-height:20px;">[]</div><div class="t td" style="left:1450.6px;top:419.5px;line-height:20px;">-</div><div class="t td" style="left:1515px;top:419.5px;line-height:20px;">-</div><div class="t td" style="left:1565.8px;top:419.5px;line-height:20px;">18/03/25</div><div class="a hl" style="left:0;top:454px;width:1621px"></div><div class="a" style="left:0;top:455px;width:1621px;height:50px;background:#fafafa"></div><div class="t g1" style="left:11px;top:460.5px;line-height:20px;">Commessa: C00005</div><div class="t g2" style="left:11px;top:478.5px;line-height:20px;"><b>Inizio attività</b>: <span class="v" style="letter-spacing:0.25px">10/03/25 15:56:54</span><span class="sep"></span><b>Fine attività</b>: <span class="v" style="letter-spacing:0.25px">25/03/25 16:13:30</span><span class="sep"></span><b>Durata effettiva</b>: <span class="v" style="letter-spacing:0.25px">-2:00:00:-4</span><span class="sep"></span><b>Tot prodotti</b>: <span class="v" style="letter-spacing:0.25px">810</span><span class="sep"></span><b>Tot prodotti scartati</b>: <span class="v" style="letter-spacing:0.25px">0</span></div><div class="a" style="left:860.0px;top:476px"><svg width="10" height="6" viewBox="0 0 10 6"><path d="M1 5l4-4 4 4" fill="none" stroke="#9c9ca5" stroke-width="1"/></svg></div><div class="a hl" style="left:0;top:505px;width:1621px"></div><div class="a ab" style="left:11px;top:522px;width:25px;background:#f1f1f8;border-color:#e0e0ee"></div><svg class="a" style="left:16px;top:525px" width="13" height="13" viewBox="0 0 24 24" ><path d="m21 21-5.197-5.197m0 0A7.5 7.5 0 1 0 5.196 5.196a7.5 7.5 0 0 0 10.607 10.607Z" fill="none" stroke="#1e1b6e" stroke-width="2.4" stroke-linecap="round"/></svg><div class="a ab" style="left:47px;top:522px;width:28px;background:#f1f1f8;border-color:#e0e0ee"></div><svg class="a" style="left:53px;top:524.5px" width="13" height="13" viewBox="0 0 13 13" ><path d="M2.5 2.3H6.5V3.7H2.6Q2.2 3.7 2.2 4.1V10.4Q2.2 10.8 2.6 10.8H8.9Q9.3 10.8 9.3 10.4V7H10.8V10.6Q10.8 12.2 9.2 12.2H2.3Q0.8 12.2 0.8 10.6V3.9Q0.8 2.3 2.5 2.3Z" fill="#1e1b6e"/><path d="M10.6 0.7L12.3 2.4Q12.8 2.9 12.3 3.4L7.2 8.5L4.3 9.2L5 6.3L10.1 0.7Q10.3 0.4 10.6 0.7Z" fill="#1e1b6e"/></svg><div class="a ab" style="left:86px;top:522px;width:29px;background:#effcf2;border-color:#d6f5de"></div><svg class="a" style="left:94px;top:525px" width="12" height="13" viewBox="0 0 12 13" ><path d="M1.6 1.2L9.6 5.9Q10.4 6.5 9.6 7.1L1.6 11.8Q0.8 12.2 0.8 11.3V1.7Q0.8 0.8 1.6 1.2Z" fill="#22c55e"/></svg><div class="a ab" style="left:126px;top:522px;width:28px;background:#fef1f1;border-color:#fad6d6"></div><svg class="a" style="left:133px;top:525px" width="12" height="13" viewBox="0 0 12 13" ><path d="M4.3 0.6H7.7L8.2 1.6H11.2V3H0.8V1.6H3.8Z" fill="#ef4444"/><path d="M1.6 3.6H10.4L9.8 11.6Q9.7 12.6 8.7 12.6H3.3Q2.3 12.6 2.2 11.6Z" fill="#ef4444"/><path d="M4.2 5V11.2M6 5V11.2M7.8 5V11.2" stroke="#fef1f1" stroke-width="0.9"/></svg><div class="t td" style="left:176px;top:522.0px;line-height:20px;">C00005</div><div class="t td" style="left:287.5px;top:522.0px;line-height:20px;">OO-8</div><div class="t td" style="left:371.5px;top:522.0px;line-height:20px;">13</div><div class="t td" style="left:476.5px;top:522.0px;line-height:20px;">10/03/25 15:56:54</div><div class="t td" style="left:612px;top:522.0px;line-height:20px;">12/03/25 15:56:58</div><div class="t td" style="left:744.3px;top:522.0px;line-height:20px;">Completato</div><div class="t td" style="left:834.8px;top:522.0px;line-height:20px;">-</div><div class="t td" style="left:997.4000000000001px;top:522.0px;line-height:20px;">800</div><div class="t td" style="left:1092.5px;top:522.0px;line-height:20px;">800</div><div class="t td" style="left:1184px;top:522.0px;line-height:20px;">0</div><div class="t td" style="left:1275.2px;top:522.0px;line-height:20px;">Troncatrice</div><div class="t td" style="left:1407px;top:522.0px;line-height:20px;">[]</div><div class="t td" style="left:1450.6px;top:522.0px;line-height:20px;">-</div><div class="t td" style="left:1515px;top:522.0px;line-height:20px;">-</div><div class="t td" style="left:1565.8px;top:522.0px;line-height:20px;">18/03/25</div><div class="a hl" style="left:0;top:557px;width:1621px"></div><div class="a ab" style="left:11px;top:573px;width:25px;background:#f1f1f8;border-color:#e0e0ee"></div><svg class="a" style="left:16px;top:576px" width="13" height="13" viewBox="0 0 24 24" ><path d="m21 21-5.197-5.197m0 0A7.5 7.5 0 1 0 5.196 5.196a7.5 7.5 0 0 0 10.607 10.607Z" fill="none" stroke="#1e1b6e" stroke-width="2.4" stroke-linecap="round"/></svg><div class="a ab" style="left:47px;top:573px;width:28px;background:#f1f1f8;border-color:#e0e0ee"></div><svg class="a" style="left:53px;top:575.5px" width="13" height="13" viewBox="0 0 13 13" ><path d="M2.5 2.3H6.5V3.7H2.6Q2.2 3.7 2.2 4.1V10.4Q2.2 10.8 2.6 10.8H8.9Q9.3 10.8 9.3 10.4V7H10.8V10.6Q10.8 12.2 9.2 12.2H2.3Q0.8 12.2 0.8 10.6V3.9Q0.8 2.3 2.5 2.3Z" fill="#1e1b6e"/><path d="M10.6 0.7L12.3 2.4Q12.8 2.9 12.3 3.4L7.2 8.5L4.3 9.2L5 6.3L10.1 0.7Q10.3 0.4 10.6 0.7Z" fill="#1e1b6e"/></svg><div class="a ab" style="left:86px;top:573px;width:29px;background:#effcf2;border-color:#d6f5de"></div><svg class="a" style="left:94px;top:576px" width="12" height="13" viewBox="0 0 12 13" ><path d="M1.6 1.2L9.6 5.9Q10.4 6.5 9.6 7.1L1.6 11.8Q0.8 12.2 0.8 11.3V1.7Q0.8 0.8 1.6 1.2Z" fill="#22c55e"/></svg><div class="a ab" style="left:126px;top:573px;width:28px;background:#fef1f1;border-color:#fad6d6"></div><svg class="a" style="left:133px;top:576px" width="12" height="13" viewBox="0 0 12 13" ><path d="M4.3 0.6H7.7L8.2 1.6H11.2V3H0.8V1.6H3.8Z" fill="#ef4444"/><path d="M1.6 3.6H10.4L9.8 11.6Q9.7 12.6 8.7 12.6H3.3Q2.3 12.6 2.2 11.6Z" fill="#ef4444"/><path d="M4.2 5V11.2M6 5V11.2M7.8 5V11.2" stroke="#fef1f1" stroke-width="0.9"/></svg><div class="t td" style="left:176px;top:573.5px;line-height:20px;">C00005</div><div class="t td" style="left:287.5px;top:573.5px;line-height:20px;">OO-10</div><div class="t td" style="left:371.5px;top:573.5px;line-height:20px;">4</div><div class="t td" style="left:476.5px;top:573.5px;line-height:20px;">17/03/25 16:02:36</div><div class="t td" style="left:612px;top:573.5px;line-height:20px;">21/03/25 16:02:48</div><div class="t td" style="left:744.3px;top:573.5px;line-height:20px;">Completato</div><div class="t td" style="left:834.8px;top:573.5px;line-height:20px;">-</div><div class="t td" style="left:997.4000000000001px;top:573.5px;line-height:20px;">200</div><div class="t td" style="left:1092.5px;top:573.5px;line-height:20px;">0</div><div class="t td" style="left:1184px;top:573.5px;line-height:20px;">0</div><div class="t td" style="left:1275.2px;top:573.5px;line-height:20px;">Centro di Lavoro</div><div class="t td" style="left:1407px;top:573.5px;line-height:20px;">[]</div><div class="t td" style="left:1450.6px;top:573.5px;line-height:20px;">-</div><div class="t td" style="left:1515px;top:573.5px;line-height:20px;">-</div><div class="t td" style="left:1565.8px;top:573.5px;line-height:20px;">18/03/25</div><div class="a hl" style="left:0;top:608px;width:1621px"></div><div class="a ab" style="left:11px;top:624px;width:25px;background:#f1f1f8;border-color:#e0e0ee"></div><svg class="a" style="left:16px;top:627px" width="13" height="13" viewBox="0 0 24 24" ><path d="m21 21-5.197-5.197m0 0A7.5 7.5 0 1 0 5.196 5.196a7.5 7.5 0 0 0 10.607 10.607Z" fill="none" stroke="#1e1b6e" stroke-width="2.4" stroke-linecap="round"/></svg><div class="a ab" style="left:47px;top:624px;width:28px;background:#f1f1f8;border-color:#e0e0ee"></div><svg class="a" style="left:53px;top:626.5px" width="13" height="13" viewBox="0 0 13 13" ><path d="M2.5 2.3H6.5V3.7H2.6Q2.2 3.7 2.2 4.1V10.4Q2.2 10.8 2.6 10.8H8.9Q9.3 10.8 9.3 10.4V7H10.8V10.6Q10.8 12.2 9.2 12.2H2.3Q0.8 12.2 0.8 10.6V3.9Q0.8 2.3 2.5 2.3Z" fill="#1e1b6e"/><path d="M10.6 0.7L12.3 2.4Q12.8 2.9 12.3 3.4L7.2 8.5L4.3 9.2L5 6.3L10.1 0.7Q10.3 0.4 10.6 0.7Z" fill="#1e1b6e"/></svg><div class="a ab" style="left:86px;top:624px;width:29px;background:#effcf2;border-color:#d6f5de"></div><svg class="a" style="left:94px;top:627px" width="12" height="13" viewBox="0 0 12 13" ><path d="M1.6 1.2L9.6 5.9Q10.4 6.5 9.6 7.1L1.6 11.8Q0.8 12.2 0.8 11.3V1.7Q0.8 0.8 1.6 1.2Z" fill="#22c55e"/></svg><div class="a ab" style="left:126px;top:624px;width:28px;background:#fef1f1;border-color:#fad6d6"></div><svg class="a" style="left:133px;top:627px" width="12" height="13" viewBox="0 0 12 13" ><path d="M4.3 0.6H7.7L8.2 1.6H11.2V3H0.8V1.6H3.8Z" fill="#ef4444"/><path d="M1.6 3.6H10.4L9.8 11.6Q9.7 12.6 8.7 12.6H3.3Q2.3 12.6 2.2 11.6Z" fill="#ef4444"/><path d="M4.2 5V11.2M6 5V11.2M7.8 5V11.2" stroke="#fef1f1" stroke-width="0.9"/></svg><div class="t td" style="left:176px;top:624.5px;line-height:20px;">C00005</div><div class="t td" style="left:287.5px;top:624.5px;line-height:20px;">OO-10</div><div class="t td" style="left:371.5px;top:624.5px;line-height:20px;">2</div><div class="t td" style="left:476.5px;top:624.5px;line-height:20px;">24/03/25 16:13:26</div><div class="t td" style="left:612px;top:624.5px;line-height:20px;">25/03/25 16:13:30</div><div class="t td" style="left:744.3px;top:624.5px;line-height:20px;">Completato</div><div class="t td" style="left:834.8px;top:624.5px;line-height:20px;">-</div><div class="t td" style="left:997.4000000000001px;top:624.5px;line-height:20px;">10</div><div class="t td" style="left:1092.5px;top:624.5px;line-height:20px;">10</div><div class="t td" style="left:1184px;top:624.5px;line-height:20px;">0</div><div class="t td" style="left:1275.2px;top:624.5px;line-height:20px;">Centro di Lavoro</div><div class="t td" style="left:1407px;top:624.5px;line-height:20px;">[]</div><div class="t td" style="left:1450.6px;top:624.5px;line-height:20px;">-</div><div class="t td" style="left:1515px;top:624.5px;line-height:20px;">-</div><div class="t td" style="left:1565.8px;top:624.5px;line-height:20px;">18/03/25</div></div>
<svg class="a" style="left:1866px;top:306px" width="9" height="7" viewBox="0 0 9 7" ><path d="M0.5 6.5L4.5 0.5L8.5 6.5Z" fill="#222a5b"/></svg>
<div class="a" style="left:1866px;top:319px;width:9px;height:284px;background:#222a5b;border-radius:4.5px"></div>
<svg class="a" style="left:1866px;top:934px" width="9" height="7" viewBox="0 0 9 7" ><path d="M0.5 0.5L4.5 6.5L8.5 0.5Z" fill="#222a5b"/></svg>
</body></html>
